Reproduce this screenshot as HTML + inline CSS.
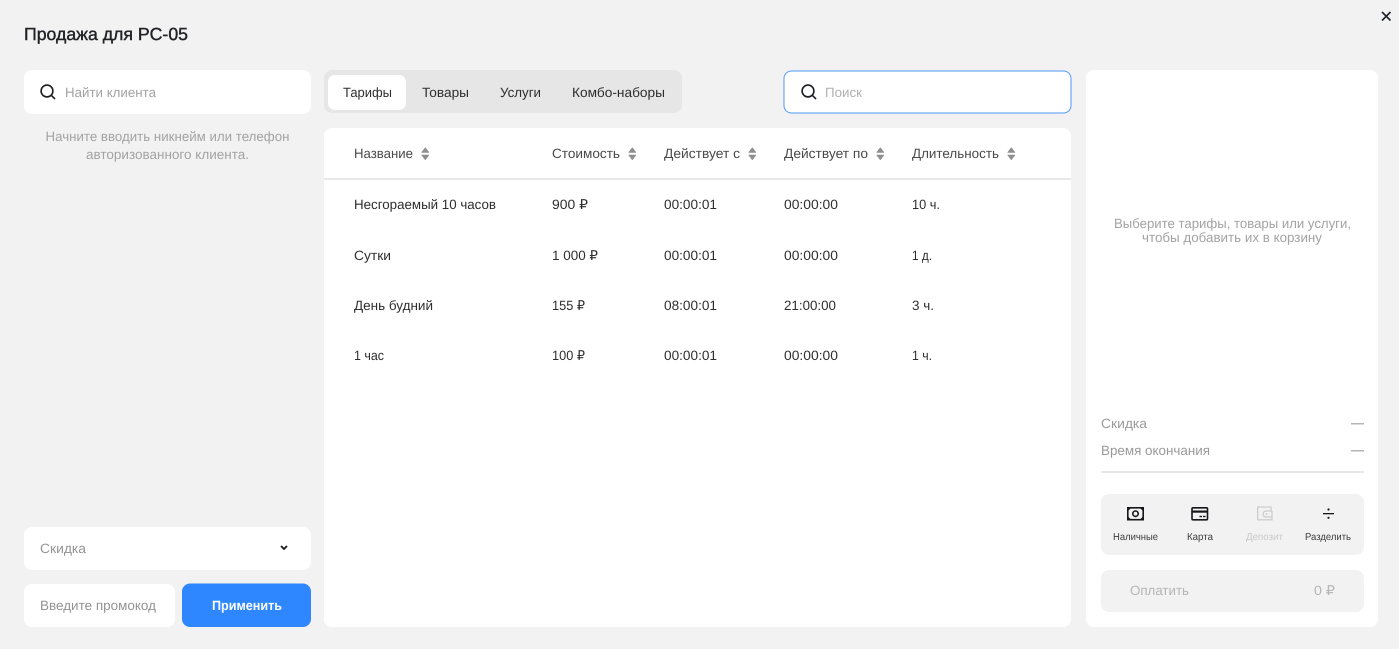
<!DOCTYPE html>
<html lang="ru"><head><meta charset="utf-8"><title>Продажа для PC-05</title>
<style>
html,body{margin:0;padding:0;width:1399px;height:649px;overflow:hidden;background:#f2f2f2}
svg{display:block}
text{font-family:"Liberation Sans",sans-serif;font-size:13.5px;fill:#3a3a3a}
.g{fill:#a3a3a3}
.h{fill:#4a4a4a}
.d{fill:#2e2e2e}
.s{font-size:10px;fill:#3c3c3c}
</style></head><body>
<svg width="1399" height="649" viewBox="0 0 1399 649" xmlns="http://www.w3.org/2000/svg" text-rendering="geometricPrecision">
<defs>
<g id="q" fill="none" stroke="#1b1d21" stroke-width="1.6"><circle cx="7" cy="7" r="5.9"/><path d="M11.3 11.3L14.6 14.6" stroke-linecap="round"/></g>
<g id="so"><path d="M0.500 5.500L4.300 0.500L8.100 5.500Z" fill="#8f8f8f" stroke="#8f8f8f" stroke-width=".5" stroke-linejoin="round"/><path d="M0.500 8L4.300 13L8.100 8Z" fill="#8f8f8f" stroke="#8f8f8f" stroke-width=".5" stroke-linejoin="round"/></g>
</defs>
<rect width="1399" height="649" fill="#f2f2f2"/>
<path d="M1382 12L1390.500 20.500M1390.500 12L1382 20.500" stroke="#1f2226" stroke-width="1.600" fill="none"/>
<text x="24" y="40" style="font-size:17.5px;fill:#202226;stroke:#202226;stroke-width:.4" textLength="164" lengthAdjust="spacingAndGlyphs">Продажа для PC-05</text>

<!-- left -->
<rect x="24" y="70" width="287" height="44" rx="8" fill="#fff"/>
<use href="#q" x="40" y="84"/>
<text x="65" y="97" class="g" textLength="91" lengthAdjust="spacingAndGlyphs">Найти клиента</text>
<text x="45.500" y="141" class="g" textLength="244" lengthAdjust="spacingAndGlyphs">Начните вводить никнейм или телефон</text>
<text x="86" y="159" class="g" textLength="163" lengthAdjust="spacingAndGlyphs">авторизованного клиента.</text>
<rect x="24" y="527" width="287" height="43" rx="8" fill="#fff"/>
<text x="40" y="553" class="g" style="fill:#949494" textLength="46" lengthAdjust="spacingAndGlyphs">Скидка</text>
<path d="M281 546L284 549L287 546" fill="none" stroke="#15171a" stroke-width="1.800"/>
<rect x="24" y="584" width="151" height="43" rx="8" fill="#fff"/>
<text x="40" y="610" class="g" style="fill:#949494" textLength="116" lengthAdjust="spacingAndGlyphs">Введите промокод</text>
<rect x="182" y="583.500" width="129" height="43.500" rx="8" fill="#2e87ff"/>
<text x="212" y="610" style="fill:#fff;font-weight:700" textLength="70" lengthAdjust="spacingAndGlyphs">Применить</text>

<!-- tabs -->
<rect x="324" y="70" width="358" height="43" rx="8" fill="#e6e6e6"/>
<rect x="328" y="75" width="78" height="35" rx="7" fill="#fff"/>
<text x="343" y="97" class="d" textLength="49" lengthAdjust="spacingAndGlyphs">Тарифы</text>
<text x="422" y="97" class="d" textLength="47" lengthAdjust="spacingAndGlyphs">Товары</text>
<text x="500" y="97" class="d" textLength="41" lengthAdjust="spacingAndGlyphs">Услуги</text>
<text x="572" y="97" class="d" textLength="93" lengthAdjust="spacingAndGlyphs">Комбо-наборы</text>

<!-- search -->
<rect x="784" y="71" width="287" height="42" rx="7.500" fill="#fff" stroke="#4d97fb" stroke-width="1"/>
<use href="#q" x="801" y="84"/>
<text x="825" y="97" style="fill:#b0b0b0" textLength="37" lengthAdjust="spacingAndGlyphs">Поиск</text>

<!-- table -->
<rect x="324" y="128" width="747" height="499" rx="8" fill="#fff"/>
<rect x="324" y="178" width="747" height="2" fill="#e8e8e8"/>
<text x="354" y="158" class="h" textLength="59" lengthAdjust="spacingAndGlyphs">Название</text>
<use href="#so" x="421" y="147"/>
<text x="552" y="158" class="h" textLength="68" lengthAdjust="spacingAndGlyphs">Стоимость</text>
<use href="#so" x="628" y="147"/>
<text x="664" y="158" class="h" textLength="76" lengthAdjust="spacingAndGlyphs">Действует с</text>
<use href="#so" x="748" y="147"/>
<text x="784" y="158" class="h" textLength="84" lengthAdjust="spacingAndGlyphs">Действует по</text>
<use href="#so" x="876" y="147"/>
<text x="912" y="158" class="h" textLength="87" lengthAdjust="spacingAndGlyphs">Длительность</text>
<use href="#so" x="1007" y="147"/>

<text x="354" y="209" class="d" textLength="142" lengthAdjust="spacingAndGlyphs">Несгораемый 10 часов</text>
<text x="552" y="209" class="d" textLength="36" lengthAdjust="spacingAndGlyphs">900 ₽</text>
<text x="664" y="209" class="d" textLength="53" lengthAdjust="spacingAndGlyphs">00:00:01</text>
<text x="784" y="209" class="d" textLength="54" lengthAdjust="spacingAndGlyphs">00:00:00</text>
<text x="912" y="209" class="d" textLength="28" lengthAdjust="spacingAndGlyphs">10 ч.</text>

<text x="354" y="260" class="d" textLength="37" lengthAdjust="spacingAndGlyphs">Сутки</text>
<text x="552" y="260" class="d" textLength="46" lengthAdjust="spacingAndGlyphs">1 000 ₽</text>
<text x="664" y="260" class="d" textLength="53" lengthAdjust="spacingAndGlyphs">00:00:01</text>
<text x="784" y="260" class="d" textLength="54" lengthAdjust="spacingAndGlyphs">00:00:00</text>
<text x="912" y="260" class="d" textLength="20" lengthAdjust="spacingAndGlyphs">1 д.</text>

<text x="354" y="310" class="d" textLength="79" lengthAdjust="spacingAndGlyphs">День будний</text>
<text x="552" y="310" class="d" textLength="33" lengthAdjust="spacingAndGlyphs">155 ₽</text>
<text x="664" y="310" class="d" textLength="53" lengthAdjust="spacingAndGlyphs">08:00:01</text>
<text x="784" y="310" class="d" textLength="52" lengthAdjust="spacingAndGlyphs">21:00:00</text>
<text x="912" y="310" class="d" textLength="22" lengthAdjust="spacingAndGlyphs">3 ч.</text>

<text x="354" y="360" class="d" textLength="30" lengthAdjust="spacingAndGlyphs">1 час</text>
<text x="552" y="360" class="d" textLength="33" lengthAdjust="spacingAndGlyphs">100 ₽</text>
<text x="664" y="360" class="d" textLength="53" lengthAdjust="spacingAndGlyphs">00:00:01</text>
<text x="784" y="360" class="d" textLength="54" lengthAdjust="spacingAndGlyphs">00:00:00</text>
<text x="912" y="360" class="d" textLength="20" lengthAdjust="spacingAndGlyphs">1 ч.</text>

<!-- right -->
<rect x="1086" y="70" width="292" height="557" rx="8" fill="#fff"/>
<text x="1114" y="228" class="g" textLength="237" lengthAdjust="spacingAndGlyphs">Выберите тарифы, товары или услуги,</text>
<text x="1142" y="242" class="g" textLength="180" lengthAdjust="spacingAndGlyphs">чтобы добавить их в корзину</text>
<text x="1101" y="428" class="g" style="fill:#9a9a9a" textLength="46" lengthAdjust="spacingAndGlyphs">Скидка</text>
<rect x="1351" y="423" width="13" height="1.500" fill="#b5b5b5"/>
<text x="1101" y="455" class="g" style="fill:#9a9a9a" textLength="109" lengthAdjust="spacingAndGlyphs">Время окончания</text>
<rect x="1351" y="450" width="13" height="1.500" fill="#b5b5b5"/>
<rect x="1101" y="471" width="263" height="2" fill="#e8e8e8"/>

<rect x="1101" y="494" width="263" height="61" rx="8" fill="#f2f2f2"/>
<!-- cash -->
<rect x="1127.800" y="507.800" width="15.400" height="11.900" fill="none" stroke="#15171a" stroke-width="1.600"/>
<circle cx="1135.500" cy="513.700" r="2.700" fill="none" stroke="#15171a" stroke-width="1.600"/>
<path d="M1127 507h5L1127 512zM1144 507h-5L1144 512zM1127 520.500h5L1127 515.500zM1144 520.500h-5L1144 515.500z" fill="#15171a"/>
<text x="1113" y="540" class="s" textLength="45" lengthAdjust="spacingAndGlyphs">Наличные</text>
<!-- card -->
<rect x="1192" y="507.800" width="15.500" height="12" rx="1" fill="none" stroke="#15171a" stroke-width="1.600"/>
<rect x="1192" y="510.500" width="15.500" height="2.200" fill="#15171a"/>
<rect x="1199.500" y="515.800" width="2.500" height="1.400" fill="#15171a"/>
<rect x="1203" y="515.800" width="2.500" height="1.400" fill="#15171a"/>
<text x="1187" y="540" class="s" textLength="26" lengthAdjust="spacingAndGlyphs">Карта</text>
<!-- wallet -->
<path d="M1271 511v-4h-13.300v12.800h14.300v-8.800" fill="none" stroke="#cdcdcd" stroke-width="1.300"/>
<path d="M1272 511h-6a3 3 0 0 0 0 6h6" fill="none" stroke="#cdcdcd" stroke-width="1.300"/>
<circle cx="1266.500" cy="514" r="1" fill="#cdcdcd"/>
<text x="1246" y="540" class="s" style="fill:#c9c9c9" textLength="37" lengthAdjust="spacingAndGlyphs">Депозит</text>
<!-- divide -->
<rect x="1323" y="513" width="11" height="1.300" fill="#15171a"/>
<circle cx="1328.500" cy="509.500" r="1.100" fill="#15171a"/>
<circle cx="1328.500" cy="517.800" r="1.100" fill="#15171a"/>
<text x="1305" y="540" class="s" textLength="46" lengthAdjust="spacingAndGlyphs">Разделить</text>

<rect x="1101" y="570" width="263" height="42" rx="8" fill="#f2f2f2"/>
<text x="1130" y="595" style="fill:#b5b5b5" textLength="59" lengthAdjust="spacingAndGlyphs">Оплатить</text>
<text x="1314" y="595" style="fill:#b5b5b5" textLength="21" lengthAdjust="spacingAndGlyphs">0 ₽</text>
</svg>
</body></html>
